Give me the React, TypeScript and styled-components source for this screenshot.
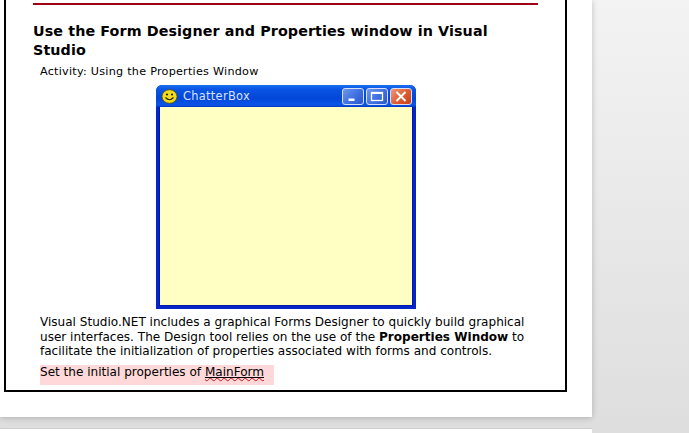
import React from "react";
import styled, { createGlobalStyle } from "styled-components";

const Global = createGlobalStyle`
  html, body { margin: 0; padding: 0; }
  body { font-family: "DejaVu Sans", Verdana, sans-serif; color: #000; }
`;

const Viewport = styled.div`
  width: 689px;
  height: 433px;
  overflow: hidden;
  background: linear-gradient(180deg, #f3f3f3 0%, #dedede 100%);
`;

const Sheet = styled.div`
  width: 592px;
  height: 417px;
  background: #fff;
  box-shadow: 0 1px 6px rgba(0, 0, 0, 0.22);
  padding: 0 0 0 4px;
  box-sizing: border-box;
`;

const NextSheet = styled.div`
  width: 592px;
  height: 8px;
  margin-top: 11px;
  background: #fff;
  border-top: 1px solid #cfcfcf;
`;

const Frame = styled.div`
  width: 563px;
  height: 392px;
  box-sizing: border-box;
  border: 2px solid #000;
  border-top: none;
  padding: 3px 27px 0 27px;
`;

const Rule = styled.div`
  height: 2px;
  background: #a00014;
`;

const Heading = styled.h1`
  margin: 17px 0 0;
  font-size: 14.3px;
  line-height: 19px;
  font-weight: 700;
  letter-spacing: 0.1px;
`;

const Activity = styled.p`
  margin: 4px 0 0 7px;
  font-size: 11.2px;
  line-height: 16px;
  letter-spacing: 0.25px;
`;

const WindowFrame = styled.div`
  width: 260px;
  height: 224px;
  margin: 5px 0 0 123px;
  box-sizing: border-box;
  border: 3px solid #0426c8;
  border-top: none;
  border-radius: 6px 6px 0 0;
  background: #0426c8;
  display: flex;
  flex-direction: column;
`;

const TitleBar = styled.div`
  height: 22px;
  flex: none;
  margin: 0 -3px;
  border-radius: 6px 6px 0 0;
  background: linear-gradient(180deg, #1c6ff0 0%, #0a55e4 20%, #0346d8 60%, #0a55e8 90%, #0338c0 100%);
  display: flex;
  align-items: center;
  padding: 0 4px 0 5px;
  gap: 4px;
`;

const TitleText = styled.span`
  color: #d9e2fb;
  font-size: 11.4px;
  font-family: "DejaVu Sans", Verdana, sans-serif;
  flex: 1;
  margin-left: 1px;
  letter-spacing: 0.3px;
`;

const ClientArea = styled.div`
  flex: 1;
  background: #ffffc4;
  border: 1px solid #0018a8;
  border-top: none;
`;

const CaptionButton = styled.div<{ $close?: boolean }>`
  width: 22px;
  height: 17px;
  box-sizing: border-box;
  border: 1px solid #d5e0f8;
  border-radius: 3px;
  margin-left: -2px;
  display: flex;
  align-items: center;
  justify-content: center;
  background: ${(p) =>
    p.$close
      ? "linear-gradient(135deg, #ee9a7c 0%, #dd5a30 55%, #c9401c 100%)"
      : "linear-gradient(135deg, #6f97ee 0%, #3f6fe0 55%, #2a58d0 100%)"};
`;

const Paragraph = styled.p`
  margin: 6px 0 0 7px;
  width: 495px;
  font-size: 12.05px;
  line-height: 14.6px;
`;

const Strong = styled.strong`
  font-weight: 700;
`;

const Callout = styled.div`
  margin: 6px 0 0 7px;
  width: 234px;
  height: 20px;
  background: #ffd9d9;
  font-size: 12.05px;
  line-height: 15px;
`;

const Underlined = styled.span`
  text-decoration: underline #000 1px;
  text-underline-offset: 1px;
`;

const Squiggle = styled.span`
  text-decoration: underline wavy #d01010 1px;
  text-underline-offset: 1px;
`;

const Smiley = () => (
  <svg width="17" height="15" viewBox="0 0 17 15">
    <ellipse cx="8.5" cy="7.5" rx="7.5" ry="6.8" fill="#f4dc18" stroke="#5a5200" strokeWidth="0.8" />
    <circle cx="6" cy="5.5" r="1.1" fill="#222" />
    <circle cx="11" cy="5.5" r="1.1" fill="#222" />
    <path d="M4.5 8.5 Q8.5 13 12.5 8.5" fill="none" stroke="#222" strokeWidth="1.2" />
  </svg>
);

const MinIcon = () => (
  <svg width="14" height="11" viewBox="0 0 14 11">
    <rect x="2.5" y="7.5" width="6" height="2.5" fill="#fff" />
  </svg>
);

const MaxIcon = () => (
  <svg width="14" height="11" viewBox="0 0 14 11">
    <rect x="1.5" y="1.5" width="11" height="8" fill="none" stroke="#fff" strokeWidth="1.3" />
    <rect x="1" y="1" width="12" height="2" fill="#fff" />
  </svg>
);

const CloseIcon = () => (
  <svg width="14" height="11" viewBox="0 0 14 11">
    <path d="M2.5 1 L11.5 10 M11.5 1 L2.5 10" stroke="#fff" strokeWidth="2" />
  </svg>
);

export default function App() {
  return (
    <Viewport>
      <Global />
      <Sheet>
        <Frame>
          <Rule />
          <Heading>Use the Form Designer and Properties window in Visual Studio</Heading>
          <Activity>Activity: Using the Properties Window</Activity>
          <WindowFrame>
            <TitleBar>
              <Smiley />
              <TitleText>ChatterBox</TitleText>
              <CaptionButton><MinIcon /></CaptionButton>
              <CaptionButton><MaxIcon /></CaptionButton>
              <CaptionButton $close><CloseIcon /></CaptionButton>
            </TitleBar>
            <ClientArea />
          </WindowFrame>
          <Paragraph>
            Visual Studio.NET includes a graphical Forms Designer to quickly build graphical user interfaces. The Design tool relies on the use of the <Strong>Properties Window</Strong> to facilitate the initialization of properties associated with forms and controls.
          </Paragraph>
          <Callout>
            Set the initial properties of <Underlined><Squiggle>MainForm</Squiggle></Underlined>
          </Callout>
        </Frame>
      </Sheet>
      <NextSheet />
    </Viewport>
  );
}
